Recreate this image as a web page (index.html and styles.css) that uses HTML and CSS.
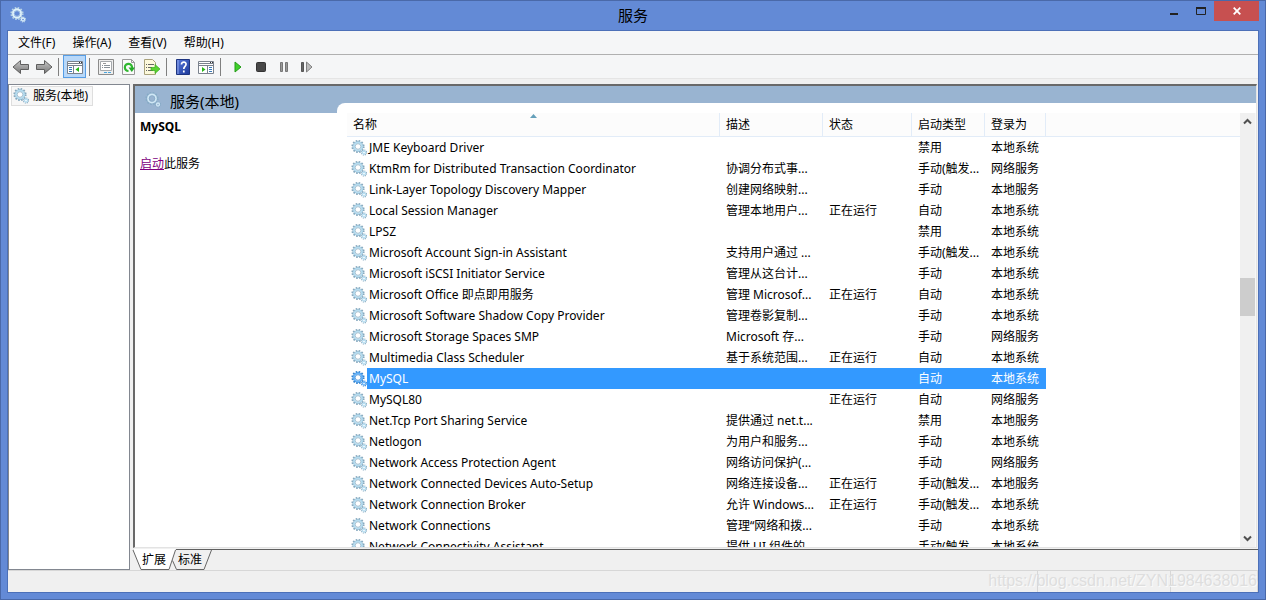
FILE: index.html
```html
<!DOCTYPE html>
<html lang="zh-CN">
<head>
<meta charset="utf-8">
<title>服务</title>
<link rel="stylesheet" href="styles.css">
</head>
<body>
<svg class="defs" width="0" height="0" aria-hidden="true">
  <defs>
    <linearGradient id="arrowFill" x1="0" y1="0" x2="0" y2="1"><stop offset="0" stop-color="#c8c8c8"/><stop offset="1" stop-color="#777"/></linearGradient>
    <linearGradient id="helpFill" x1="0" y1="0" x2="1" y2="1"><stop offset="0" stop-color="#5577dc"/><stop offset="1" stop-color="#1d399a"/></linearGradient>
    <symbol id="gear" viewBox="0 0 16 16">
      <circle class="teeth" cx="7" cy="6.500" r="5.700" fill="none" stroke-width="1.800" stroke-dasharray="1.600 1.380"/>
      <circle class="rim" cx="7" cy="6.500" r="4.900" fill="none" stroke-width="1"/>
      <circle class="ring" cx="7" cy="6.500" r="4" fill="none" stroke-width="1.800"/>
      <circle class="hub" cx="7" cy="6.500" r="2.800" stroke-width=".7"/>
      <circle class="teeth" cx="13" cy="12.500" r="2.500" fill="none" stroke-width="1.200" stroke-dasharray="1.100 .860"/>
      <circle class="small" cx="13" cy="12.500" r="1.500" stroke-width="1.300"/>
    </symbol>
  </defs>
</svg>
<div class="window">
  <header class="titlebar">
    <svg class="gear gear-bright"><use href="#gear"/></svg>
    <h1>服务</h1>
    <div class="controls">
      <button class="ctl" aria-label="最小化"><svg width="10" height="10"><path d="M1 7h8v2H1z" fill="#222"/></svg></button>
      <button class="ctl" aria-label="最大化"><svg width="10" height="8"><path d="M.5.5h9v7h-9z" fill="none" stroke="#222"/><path d="M0 0h10v2H0z" fill="#222"/></svg></button>
      <button class="ctl close" aria-label="关闭"><svg width="8" height="8"><path d="M.7.7l6.600 6.600M7.300.7L.7 7.300" stroke="#fff" stroke-width="1.800"/></svg></button>
    </div>
  </header>
  <div class="client">
    <nav class="menubar">
      <button>文件(F)</button><button>操作(A)</button><button>查看(V)</button><button>帮助(H)</button>
    </nav>
    <div class="toolbar">
      <button aria-label="后退"><svg width="18" height="16"><path d="M1 8l7.500-6.500v4H16.500v5H8.500v4z" fill="url(#arrowFill)" stroke="#5e5e5e"/></svg></button>
      <button aria-label="前进"><svg width="18" height="16"><path d="M17 8L9.500 1.500v4H1.500v5h8v4z" fill="url(#arrowFill)" stroke="#5e5e5e"/></svg></button>
      <span class="sep"></span>
      <button class="active" aria-label="显示控制台树"><svg width="16" height="14"><path d="M.5 1.500h15v12H.5z" fill="#fff" stroke="#7a828d"/><path d="M1 3.500h14M1 5.500h14M6.500 5v8" stroke="#7a828d"/><path d="M12 2.500h1m1 0h1" stroke="#333"/><path d="M2 7.500h3M2 9.500h3M2 11.500h3" stroke="#3979b8"/><path d="M12 7v5L8.500 9.500z" fill="#27b617"/></svg></button>
      <span class="sep"></span>
      <button aria-label="属性"><svg width="16" height="16"><path d="M.5.5h15v15H.5z" fill="#eee" stroke="#8b8b8b"/><path d="M2.500 2.500h11v9h-11z" fill="#fff" stroke="#a5a9ad"/><path d="M5 4.500h3" stroke="#999"/><path d="M4 6.500h1m1 0h6M4 8.500h1m1 0h6" stroke="#89929a"/><path d="M6 13.500h3m1 0h3" stroke="#4aa5dc"/></svg></button>
      <button aria-label="刷新"><svg width="16" height="16"><path d="M1.500.5h9l3 3v12h-12z" fill="#fafafa" stroke="#999"/><path d="M10.500.5v3h3" fill="none" stroke="#999"/><path d="M7.500 12A3.600 3.600 0 1 1 11 9" fill="none" stroke="#31b831" stroke-width="2.200"/><path d="M7.500 8.500H14l-3.200 4.500z" fill="#22a927"/></svg></button>
      <button aria-label="导出列表"><svg width="16" height="16"><path d="M.5.5h8l3 3v12H.5z" fill="#fdf9dc" stroke="#a9a27c"/><path d="M2 5.500h1m1 0h6M2 8.500h1m1 0h4M2 11.500h1m1 0h5" stroke="#666"/><path d="M7 8.500h4V5.500l5 4.500-5 4.500V11.500H7z" fill="#5bd331" stroke="#39aa21" stroke-width=".7"/></svg></button>
      <span class="sep"></span>
      <button aria-label="帮助"><svg width="14" height="16"><path d="M.5.5h13v15H.5z" fill="url(#helpFill)" stroke="#1d3480"/><path d="M2 1v14" stroke="#94a9eb"/><path d="M5.500 5.500C5.500 2 10.500 2.500 10 5.500 9.800 7.500 7.800 7.500 7.800 10M7.800 11.500v2" fill="none" stroke="#fff" stroke-width="1.700"/></svg></button>
      <button aria-label="显示操作窗格"><svg width="16" height="14"><path d="M.5 1.500h15v12H.5z" fill="#fff" stroke="#7a828d"/><path d="M1 3.500h14M1 5.500h14M9.500 5v8" stroke="#7a828d"/><path d="M12 2.500h1m1 0h1" stroke="#333"/><path d="M11 7.500h3M11 9.500h3M11 11.500h3" stroke="#3979b8"/><path d="M4 7v5l3.500-2.500z" fill="#27b617"/></svg></button>
      <span class="sep"></span>
      <button class="run" aria-label="启动服务"><svg width="8" height="12"><path d="M1 1v10L7 6z" fill="#3fd02b" stroke="#249c18"/></svg></button>
      <button aria-label="停止服务"><svg width="12" height="12"><rect x="1.500" y="1.500" width="9" height="9" rx="1" fill="#484848" stroke="#333"/></svg></button>
      <button aria-label="暂停服务"><svg width="10" height="12"><path d="M1.500 1.500h2v9h-2zM6.500 1.500h2v9h-2z" fill="#999" stroke="#777"/></svg></button>
      <button class="restart" aria-label="重新启动服务"><svg width="14" height="12"><path d="M1.500 1.500h2v9h-2z" fill="#666" stroke="#555"/><path d="M6.500 1v10L12 6z" fill="#bbb" stroke="#808080"/></svg></button>
    </div>
    <main class="workspace">
      <aside class="tree"><a href="#services" class="node"><svg class="gear"><use href="#gear"/></svg>服务(本地)</a></aside>
      <section class="result" id="services">
        <div class="pane">
          <div class="banner"><svg class="gear gear-banner"><use href="#gear"/></svg><h2>服务(本地)</h2></div>
          <div class="content">
            <div class="detail"><h3>MySQL</h3><p><a href="#start">启动</a>此服务</p></div>
            <div class="listing">
              <div class="viewport">
                <table>
                  <colgroup><col class="c-name"><col class="c-desc"><col class="c-state"><col class="c-type"><col class="c-login"><col></colgroup>
                  <thead><tr><th class="sorted">名称<svg class="sort" width="7" height="4"><path d="M0 4l3.500-4L7 4z" fill="#65a0ba"/></svg></th><th>描述</th><th>状态</th><th>启动类型</th><th>登录为</th><th></th></tr></thead>
                  <tbody>
                    <tr><td><svg class="gear"><use href="#gear"/></svg><span>JME Keyboard Driver</span></td><td></td><td></td><td>禁用</td><td>本地系统</td></tr>
                    <tr><td><svg class="gear"><use href="#gear"/></svg><span>KtmRm for Distributed Transaction Coordinator</span></td><td>协调分布式事...</td><td></td><td>手动(触发...</td><td>网络服务</td></tr>
                    <tr><td><svg class="gear"><use href="#gear"/></svg><span>Link-Layer Topology Discovery Mapper</span></td><td>创建网络映射...</td><td></td><td>手动</td><td>本地服务</td></tr>
                    <tr><td><svg class="gear"><use href="#gear"/></svg><span>Local Session Manager</span></td><td>管理本地用户...</td><td>正在运行</td><td>自动</td><td>本地系统</td></tr>
                    <tr><td><svg class="gear"><use href="#gear"/></svg><span>LPSZ</span></td><td></td><td></td><td>禁用</td><td>本地系统</td></tr>
                    <tr><td><svg class="gear"><use href="#gear"/></svg><span>Microsoft Account Sign-in Assistant</span></td><td>支持用户通过 ...</td><td></td><td>手动(触发...</td><td>本地系统</td></tr>
                    <tr><td><svg class="gear"><use href="#gear"/></svg><span>Microsoft iSCSI Initiator Service</span></td><td>管理从这台计...</td><td></td><td>手动</td><td>本地系统</td></tr>
                    <tr><td><svg class="gear"><use href="#gear"/></svg><span>Microsoft Office 即点即用服务</span></td><td>管理 Microsof...</td><td>正在运行</td><td>自动</td><td>本地系统</td></tr>
                    <tr><td><svg class="gear"><use href="#gear"/></svg><span>Microsoft Software Shadow Copy Provider</span></td><td>管理卷影复制...</td><td></td><td>手动</td><td>本地系统</td></tr>
                    <tr><td><svg class="gear"><use href="#gear"/></svg><span>Microsoft Storage Spaces SMP</span></td><td>Microsoft 存...</td><td></td><td>手动</td><td>网络服务</td></tr>
                    <tr><td><svg class="gear"><use href="#gear"/></svg><span>Multimedia Class Scheduler</span></td><td>基于系统范围...</td><td>正在运行</td><td>自动</td><td>本地系统</td></tr>
                    <tr class="selected"><td><svg class="gear"><use href="#gear"/></svg><span>MySQL</span></td><td></td><td></td><td>自动</td><td>本地系统</td></tr>
                    <tr><td><svg class="gear"><use href="#gear"/></svg><span>MySQL80</span></td><td></td><td>正在运行</td><td>自动</td><td>网络服务</td></tr>
                    <tr><td><svg class="gear"><use href="#gear"/></svg><span>Net.Tcp Port Sharing Service</span></td><td>提供通过 net.t...</td><td></td><td>禁用</td><td>本地服务</td></tr>
                    <tr><td><svg class="gear"><use href="#gear"/></svg><span>Netlogon</span></td><td>为用户和服务...</td><td></td><td>手动</td><td>本地系统</td></tr>
                    <tr><td><svg class="gear"><use href="#gear"/></svg><span>Network Access Protection Agent</span></td><td>网络访问保护(...</td><td></td><td>手动</td><td>网络服务</td></tr>
                    <tr><td><svg class="gear"><use href="#gear"/></svg><span>Network Connected Devices Auto-Setup</span></td><td>网络连接设备...</td><td>正在运行</td><td>手动(触发...</td><td>本地服务</td></tr>
                    <tr><td><svg class="gear"><use href="#gear"/></svg><span>Network Connection Broker</span></td><td>允许 Windows...</td><td>正在运行</td><td>手动(触发...</td><td>本地系统</td></tr>
                    <tr><td><svg class="gear"><use href="#gear"/></svg><span>Network Connections</span></td><td>管理“网络和拨...</td><td></td><td>手动</td><td>本地系统</td></tr>
                    <tr><td><svg class="gear"><use href="#gear"/></svg><span>Network Connectivity Assistant</span></td><td>提供 UI 组件的...</td><td></td><td>手动(触发...</td><td>本地系统</td></tr>
                  </tbody>
                </table>
              </div>
              <div class="scrollbar">
                <button aria-label="向上滚动"><svg width="9" height="7"><path d="M1 5.500L4.500 2 8 5.500" fill="none" stroke="#505050" stroke-width="2"/></svg></button>
                <div class="before"></div><div class="thumb"></div><div class="after"></div>
                <button aria-label="向下滚动"><svg width="9" height="7"><path d="M1 1.500L4.500 5 8 1.500" fill="none" stroke="#505050" stroke-width="2"/></svg></button>
              </div>
            </div>
          </div>
        </div>
        <div class="tabs">
          <svg class="tab-shape" width="80" height="21"><path d="M0-1l8 21h28l7-21z" fill="#fff"/><path d="M0 0l8 19.500h28L42.500 0M39.500 10.500l4 9h27.500L78.500 0" fill="none" stroke="#666"/></svg>
          <button>扩展</button><button>标准</button>
        </div>
      </section>
    </main>
    <footer class="status"><span></span><span></span></footer>
  </div>
  <div class="watermark">https://blog.csdn.net/ZYN1984638016</div>
</div>
</body>
</html>
```
FILE: styles.css
```css
* { box-sizing: border-box; }
body { margin: 0; color: #000; font: 12px/20px "Noto Sans", "Noto Sans CJK SC", sans-serif; }
button { margin: 0; padding: 0; border: 0; background: none; color: inherit; font: inherit; }
h1, h2, h3, p { margin: 0; font-weight: normal; }
svg { display: block; flex: none; }
.defs { position: absolute; }
.window { position: relative; display: flex; flex-direction: column; height: 100vh; padding: 0 7px 7px; border: 1px solid #4a69a9; background: #638ad6; }
.titlebar { display: grid; grid-template-columns: 1fr auto 1fr; height: 30px; }
.titlebar h1 { font-size: 15px; line-height: 28px; }
.titlebar .gear { margin: 6px 0 0 2px; }
.controls { display: flex; justify-content: flex-end; align-items: flex-start; margin-right: -1px; }
.ctl { display: flex; align-items: center; justify-content: center; width: 27px; height: 20px; }
.close { width: 45px; background: #c75050; }
.client { flex: 1; min-height: 0; display: flex; flex-direction: column; outline: 1px solid #4c70b8; background: #f0f0f0; }
.menubar { display: flex; gap: 17px; height: 24px; padding-left: 10px; border-bottom: 1px solid #b0b0b0; background: #f5f6f7; line-height: 23px; }
.toolbar { display: flex; align-items: center; height: 24px; padding-left: 1px; border-bottom: 1px solid #e5e5e5; background: #f5f6f7; }
.toolbar button { display: flex; align-items: center; justify-content: center; width: 23px; height: 23px; }
.toolbar .active { border: 1px solid #569de5; background: #b8d8f9; }
.toolbar .run { margin-left: 1px; }
.sep { width: 1px; height: 18px; margin: 0 4px 0 3px; background: #808080; }
.gear { width: 16px; height: 16px; --dark: #86a9bf; --light: #b4dcf0; --hub: #fff; }
.teeth, .ring, .rim, .hub, .small { stroke: var(--dark); }
.ring, .small { stroke: var(--light); }
.hub, .small { fill: var(--hub); }
.gear-bright { --dark: #b9d4e6; --light: #dff2fb; --hub: #638ad6; }
.gear-banner { --dark: #86abc6; --light: #cfe7f5; --hub: #99b4d1; }
.workspace { flex: 1; min-height: 0; display: flex; gap: 3px; padding-top: 5px; }
.tree { width: 122px; padding: 1px 2px; border: 1px solid #828790; background: #fff; }
.node { display: inline-flex; align-items: center; gap: 4px; height: 20px; padding: 0 4px 0 1px; border: 1px solid #dedede; background: #f7f7f7; color: #000; text-decoration: none; }
.result { flex: 1; min-width: 0; display: flex; flex-direction: column; }
.pane { flex: 1; min-height: 0; display: flex; flex-direction: column; margin-right: 1px; border: 2px solid #696969; border-right: 1px solid #e3e3e3; border-bottom: 1px solid #e3e3e3; background: #fff; }
.banner { display: flex; align-items: center; gap: 9px; height: 27px; padding: 4px 0 0 10px; background: #99b4d1; }
.banner .gear { margin-bottom: 4px; }
.banner h2 { font-size: 15px; line-height: 23px; }
.content { flex: 1; min-height: 0; display: flex; }
.detail { width: 202px; padding: 4px 5px; }
.detail h3 { font-size: 12px; font-weight: bold; line-height: 19px; }
.detail p { margin-top: 18px; }
.detail a { color: #800080; }
.listing { flex: 1; min-width: 0; display: flex; margin-top: -10px; padding: 10px 0 0 10px; border-top-left-radius: 8px; background: #fff; }
.viewport { flex: 1; min-width: 0; overflow: hidden; }
table { width: 100%; table-layout: fixed; border-collapse: separate; border-spacing: 0; }
.c-name { width: 373px; }
.c-desc { width: 103px; }
.c-state { width: 89px; }
.c-type { width: 73px; }
.c-login { width: 61px; }
th { height: 24px; padding: 0 6px; border-right: 1px solid #e2ecf8; border-bottom: 1px solid #e2ecf8; background: #fcfcfc; font-weight: normal; line-height: 23px; text-align: left; white-space: nowrap; }
th:last-child { border-right: 0; }
.sorted { position: relative; }
.sort { position: absolute; top: 1px; right: 0; left: 0; margin: 0 auto; }
td { height: 21px; padding: 0 0 0 6px; line-height: 21px; white-space: nowrap; overflow: hidden; }
td:first-child { display: flex; align-items: center; padding-left: 4px; }
td:first-child span { flex: 1; padding-left: 2px; }
.selected td:nth-child(n+2), .selected td:first-child span { background: #3399ff; color: #fff; }
.selected .gear { --dark: #3383cf; --light: #65b3fa; }
.scrollbar { display: flex; flex-direction: column; width: 16px; border-right: 1px solid #f7f7f7; background: #f0f0f0; }
.scrollbar button { display: flex; align-items: center; justify-content: center; height: 17px; }
.before { flex: 148; }
.thumb { flex: 38; background: #cdcdcd; }
.after { flex: 214; }
.tabs { position: relative; display: flex; gap: 12px; height: 21px; margin-top: 1px; padding-left: 9px; border-top: 1px solid #606060; line-height: 20px; }
.tab-shape { position: absolute; top: 0; left: 0; overflow: visible; }
.tabs button { position: relative; }
.status { display: flex; justify-content: flex-end; height: 22px; border-top: 1px solid #d7d7d7; }
.status span { width: 133px; border-left: 1px solid #d7d7d7; }
.status span:last-child { width: 88px; border-right: 1px solid #d7d7d7; }
.watermark { position: absolute; right: 8px; bottom: 6px; color: #dedede; font: 16px/24px "Liberation Sans", sans-serif; text-shadow: 1px 1px #fafafa; }
```
